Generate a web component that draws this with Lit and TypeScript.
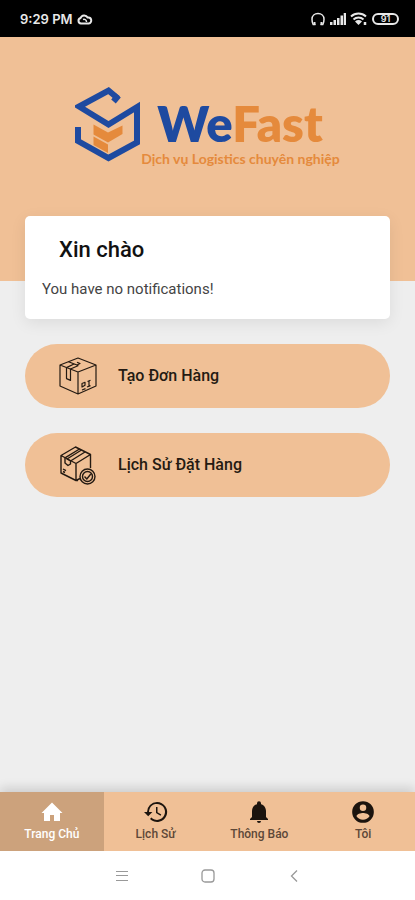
import { LitElement, html, css, svg, TemplateResult } from "lit";
import { customElement, property, state } from "lit/decorators.js";
import { classMap } from "lit/directives/class-map.js";

const statusIcons = {
  cloud: svg`<svg class="cloud" width="16" height="14" viewBox="0 0 16 14" fill="none" stroke="currentColor" stroke-width="2" stroke-linejoin="round">
    <path d="M4 11.500a2.800 2.800 0 0 1-.4-5.500A3.800 3.800 0 0 1 10.600 5.500a3 3 0 0 1 1.200 6z"/><path d="M6 7.500a2.500 2.500 0 0 1 3.500 2.500" stroke-width="1.500"/></svg>`,
  headset: svg`<svg width="16" height="14" viewBox="0 0 16 14" fill="none" stroke="currentColor" stroke-width="1.500">
    <path d="M5.500 12.500H3.200C2.300 11 2 9.200 2 7.200 2 3.800 4.700 1.500 8 1.500s6 2.300 6 5.700c0 2-.3 3.800-1.200 5.300h-2.300"/><path d="M4.500 10v3M11.500 10v3" stroke-width="2"/></svg>`,
  signal: svg`<svg width="16" height="14" viewBox="0 0 16 14" fill="currentColor">
    <path d="M0 10h2.500v3H0zM3.500 8H6v5H3.500zM7 6h2.500v7H7zM10.500 3.500H13V13h-2.500zM13.700 1H16v12h-2.300z"/></svg>`,
  wifi: svg`<svg width="18" height="14" viewBox="0 0 18 14" fill="none" stroke="currentColor" stroke-width="2">
    <path d="M1 4.500a11 11 0 0 1 15 0M3.500 7.500a7.500 7.500 0 0 1 10 0"/><path d="M5 9.500a5.500 5.500 0 0 1 7 0L8.500 13z" fill="currentColor" stroke="none"/><path d="M15 10v3" stroke-width="2.500"/></svg>`,
};

const logoMark = svg`<svg width="66" height="78" viewBox="0 0 66 78" fill="none" stroke="#1e4aa0" stroke-width="6" aria-hidden="true">
  <path d="M43 13.500 33.500 5.500 4 21.500 33.500 39.500 62 22V57.500L33.500 73 3 56V42"/><path d="M38.500 16.500 43.500 10.500"/><path d="M59 21.500 65 18V30H59z" fill="#1e4aa0" stroke="none"/>
  <path d="M18.500 39.500 33 47.500 47.500 40.500V49L33 57.500 18.500 49.500zM18.500 51.500 33 59.500V68L18.500 60z" fill="#e58a3c" stroke="none"/></svg>`;

const boxIcon = svg`<svg width="40" height="40" viewBox="0 0 40 40" fill="none" stroke="currentColor" stroke-width="1.200" stroke-linejoin="round" aria-hidden="true">
  <path d="M20 2 38 9v21L20 38 2 30V9zM2 9l18 7 18-7M20 16v22"/>
  <path d="M10.500 5.700 19 9l3-1.500-3-1.300M8.500 11.600v11l4 1.800V13l8-3.500M8.500 11.600 16 8"/>
  <path d="M24 27.500l3-1.200v3L24 31zM24 34l3.500-1.400M29.500 25.500l3-1.200M31 25v5M29 31l3.500-1.400"/></svg>`;

const boxCheckIcon = svg`<svg width="40" height="40" viewBox="0 0 40 40" fill="none" stroke="currentColor" stroke-width="1.400" stroke-linejoin="round" aria-hidden="true">
  <path d="M20 35.500h-2L3 28V10.500L17.500 2 32.500 9.500V23M3 10.500 18 18.500 32.500 9.500M18 18.500v17L22 33.500"/>
  <path d="M7 13v5l3 2.500 2.500-1.500v-3L27 7M7 12.800 21.500 4M12.500 16 9 14 23.500 5M5 24l3 1.600M5 26.500l2 1"/>
  <circle cx="29.500" cy="31.500" r="7.500"/><circle cx="29.500" cy="31.500" r="5"/><path d="M26.500 31.500l2.300 2.500 4-5"/></svg>`;

const homeIcon = svg`<svg width="24" height="24" viewBox="0 0 24 24" fill="currentColor" aria-hidden="true"><path d="M10 21v-6h4v6h6v-8h2.500L12 2.500 1.500 13H4v8z"/></svg>`;
const historyIcon = svg`<svg width="24" height="24" viewBox="0 0 24 24" fill="currentColor" aria-hidden="true"><path d="M13 2a10 10 0 0 0-10 10H0l4.200 4.200L8.400 12H5a8 8 0 1 1 2.400 5.600L6 19A10 10 0 1 0 13 2zm-1 5v6l4.500 2.700.8-1.200-3.800-2.300V7z"/></svg>`;
const bellIcon = svg`<svg width="24" height="24" viewBox="0 0 24 24" fill="currentColor" aria-hidden="true"><path d="M12 23a2 2 0 0 0 2-2h-4a2 2 0 0 0 2 2zm7-6v-6c0-3.300-1.900-6.100-5-6.800V3.300a2 2 0 0 0-4 0v.9C6.900 4.900 5 7.700 5 11v6l-2 2v1h18v-1z"/></svg>`;
const accountIcon = svg`<svg width="26" height="26" viewBox="0 0 24 24" fill="currentColor" aria-hidden="true"><path d="M12 2a10 10 0 1 0 0 20 10 10 0 0 0 0-20zm0 3a3 3 0 1 1 0 6 3 3 0 0 1 0-6zm0 14.200a7.200 7.200 0 0 1-6-3.200c0-2 4-3.100 6-3.100s6 1.100 6 3.100a7.200 7.200 0 0 1-6 3.200z"/></svg>`;

@customElement("status-bar")
class StatusBar extends LitElement {
  static styles = css`
    :host { display: flex; justify-content: space-between; align-items: center; box-sizing: border-box; height: 37px; padding: 0 16px 0 20px; background: #000; color: #e8e8e8; font: 600 13px/16px Inter, Roboto, sans-serif; }
    .group { display: flex; align-items: center; gap: 4px; }
    .battery { box-sizing: border-box; width: 27px; height: 12px; border: 2px solid currentColor; border-radius: 6px; font-size: 9px; line-height: 8px; text-align: center; }
  `;
  render() {
    return html`
      <div class="group"><span>9:29 PM</span>${statusIcons.cloud}</div>
      <div class="group">${statusIcons.headset}${statusIcons.signal}${statusIcons.wifi}<span class="battery">91</span></div>`;
  }
}

@customElement("action-button")
class ActionButton extends LitElement {
  @property() label = "";
  @property({ attribute: false }) icon?: TemplateResult;
  static styles = css`
    :host { display: block; }
    .action { display: flex; align-items: center; gap: 20px; box-sizing: border-box; width: 100%; height: 64px; padding: 0 33px; border: 0; border-radius: 32px; background: #f0c096; color: #241a12; font: 500 16px/20px Roboto, sans-serif; cursor: pointer; }
  `;
  render() {
    return html`<button class="action" type="button">${this.icon}<span>${this.label}</span></button>`;
  }
}

@customElement("app-root")
class AppRoot extends LitElement {
  @state() private active = 0;

  private tabs = [
    { label: "Trang Chủ", icon: homeIcon },
    { label: "Lịch Sử", icon: historyIcon },
    { label: "Thông Báo", icon: bellIcon },
    { label: "Tôi", icon: accountIcon },
  ];

  static styles = css`
    :host { display: flex; flex-direction: column; min-height: 100vh; background: #eee; font-family: Roboto, sans-serif; color: #111; }
    .hero { display: flex; justify-content: center; padding: 48px 0 112px; background: #f0c096; }
    .brand { display: flex; align-items: flex-start; }
    .words { display: flex; flex-direction: column; padding-top: 12px; font-family: Lato, sans-serif; font-weight: 700; color: #e58a3c; white-space: nowrap; }
    .name { margin-left: 16px; font-size: 49px; line-height: 52px; font-weight: 800; }
    .we { color: #1e4aa0; }
    .tagline { font-size: 14px; line-height: 20px; }
    .content { display: flex; flex-direction: column; flex: 1; gap: 25px; margin-top: -65px; padding: 0 25px; }
    .card { box-sizing: border-box; min-height: 103px; padding: 20px 17px 16px; border-radius: 5px; background: #fff; box-shadow: 0 4px 16px rgba(0, 0, 0, 0.08); }
    .greeting { margin: 0 0 14px; padding-left: 17px; font-size: 22px; line-height: 28px; font-weight: 500; }
    .notice { margin: 0; font-size: 15px; line-height: 22px; color: #444; }
    .tabs { display: grid; grid-template-columns: repeat(4, 1fr); background: #f0c096; box-shadow: 0 -4px 10px rgba(0, 0, 0, 0.14); }
    .tab { display: flex; flex-direction: column; align-items: center; height: 59px; padding: 7px 0 8px; border: 0; background: none; color: #1c140e; font: 400 12px/16px Roboto, sans-serif; cursor: pointer; }
    .glyph { display: flex; align-items: center; justify-content: center; height: 26px; margin-bottom: 1px; }
    .caption { color: #5d4838; font-weight: 500; }
    .active { background: #cca27c; color: #fff; }
    .active .caption { color: #fff; }
    .system { display: flex; justify-content: center; align-items: center; gap: 70px; height: 49px; background: #fff; }
    .key { display: flex; padding: 0; border: 0; background: none; color: #999; }
  `;

  render() {
    return html`
      <status-bar></status-bar>
      <header class="hero">
        <div class="brand">
          ${logoMark}
          <div class="words">
            <div class="name"><span class="we">We</span>Fast</div>
            <div class="tagline">Dịch vụ Logistics chuyên nghiệp</div>
          </div>
        </div>
      </header>
      <main class="content">
        <section class="card">
          <h1 class="greeting">Xin chào</h1>
          <p class="notice">You have no notifications!</p>
        </section>
        <action-button label="Tạo Đơn Hàng" .icon=${boxIcon}></action-button>
        <action-button label="Lịch Sử Đặt Hàng" .icon=${boxCheckIcon}></action-button>
      </main>
      <nav class="tabs">
        ${this.tabs.map((tab, i) => html`
          <button type="button" class=${classMap({ tab: true, active: i === this.active })} @click=${() => (this.active = i)}>
            <span class="glyph">${tab.icon}</span><span class="caption">${tab.label}</span>
          </button>`)}
      </nav>
      <div class="system">
        <button class="key" type="button" aria-label="Menu"><svg width="16" height="16" viewBox="0 0 16 16" fill="none" stroke="currentColor"><path d="M2 3.500h12M2 7.500h12M2 12.500h12"/></svg></button>
        <button class="key" type="button" aria-label="Home"><svg width="16" height="16" viewBox="0 0 16 16" fill="none" stroke="currentColor" stroke-width="1.300"><rect x="2" y="2" width="12" height="12" rx="3"/></svg></button>
        <button class="key" type="button" aria-label="Back"><svg width="16" height="16" viewBox="0 0 16 16" fill="none" stroke="currentColor" stroke-width="1.300"><path d="M11 2.500 5.500 8 11 13.500"/></svg></button>
      </div>`;
  }
}
